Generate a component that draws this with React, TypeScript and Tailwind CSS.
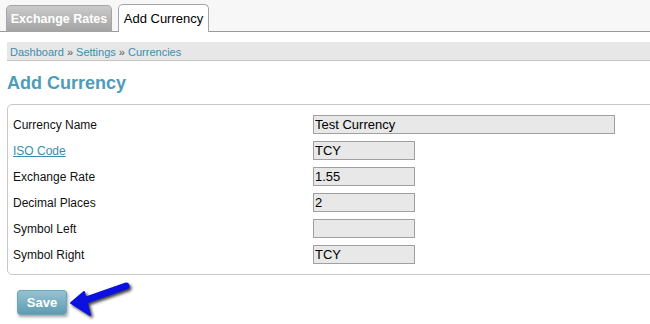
const font = { fontFamily: '"Liberation Sans", Arial, sans-serif' };

type Field = { label: string; value: string; wide?: boolean; link?: boolean };

const fields: Field[] = [
  { label: "Currency Name", value: "Test Currency", wide: true },
  { label: "ISO Code", value: "TCY", link: true },
  { label: "Exchange Rate", value: "1.55" },
  { label: "Decimal Places", value: "2" },
  { label: "Symbol Left", value: "" },
  { label: "Symbol Right", value: "TCY" },
];

function Arrow() {
  return (
    <svg
      width="70"
      height="38"
      viewBox="0 0 70 38"
      className="absolute left-[51px] top-[-9px] drop-shadow-[2px_2px_1.5px_rgba(0,0,0,0.75)]"
    >
      <line x1="58" y1="5" x2="18" y2="19" stroke="#0b12e0" strokeWidth="7" strokeLinecap="round" />
      <polygon points="3,22 16,11 22,34" fill="#0b12e0" stroke="#0b12e0" strokeWidth="2" strokeLinejoin="round" />
    </svg>
  );
}

export default function App() {
  return (
    <div className="w-[650px] h-[324px] overflow-hidden bg-white text-[#111]" style={font}>
      <div className="h-8 bg-[#f7f7f7] border-b border-[#9a9a9a] flex items-end gap-[6px] pl-[6px]">
        <div className="h-[27px] w-[106px] mb-[-1px] rounded-t-[5px] border border-b-0 border-[#a5a5a5] bg-gradient-to-b from-[#cbcbcb] to-[#a2a2a2] flex items-center justify-center text-[12.5px] font-bold text-white pt-[1px]">
          Exchange Rates
        </div>
        <div className="h-[28px] w-[91px] mb-[-1px] rounded-t-[5px] border border-b-0 border-[#a5a5a5] bg-white flex items-center justify-center text-[13px] text-black">
          Add Currency
        </div>
      </div>

      <div className="ml-[7px] mt-[10px] h-[19px] bg-[#e7e7e7] border-b border-[#c4c4c4] pl-[3px] pt-[2px] text-[11px] leading-[16px] text-[#3a8db0]">
        Dashboard <span className="text-[#555]">»</span> Settings <span className="text-[#555]">»</span> Currencies
      </div>

      <h1 className="ml-[7px] mt-[12px] text-[18px] leading-[21px] font-bold text-[#4f9cb8]">Add Currency</h1>

      <div className="ml-[7px] mt-[10px] w-[660px] rounded-[5px] border border-[#c8c8c8] pl-[5px] py-[10px] flex flex-col gap-[7px]">
        {fields.map((f) => (
          <div key={f.label} className="flex items-center h-[19px]">
            <div className="w-[300px] text-[12px]">
              {f.link ? <span className="text-[#3a8db0] underline">{f.label}</span> : f.label}
            </div>
            <div
              className={`${f.wide ? "w-[302px]" : "w-[102px]"} h-[19px] bg-[#e8e8e8] border border-[#a0a0a0] pl-[1px] text-[13px] leading-[17px] text-black`}
            >
              {f.value}
            </div>
          </div>
        ))}
      </div>

      <div className="relative ml-[17px] mt-[15px]">
        <button className="w-[50px] h-[25px] rounded-[3px] bg-gradient-to-b from-[#93c3d2] to-[#5f9bb0] text-white font-bold text-[13px] shadow-[1px_2px_3px_rgba(0,0,0,0.35)] border border-[#6fa5b8]">
          Save
        </button>
        <Arrow />
      </div>
    </div>
  );
}
